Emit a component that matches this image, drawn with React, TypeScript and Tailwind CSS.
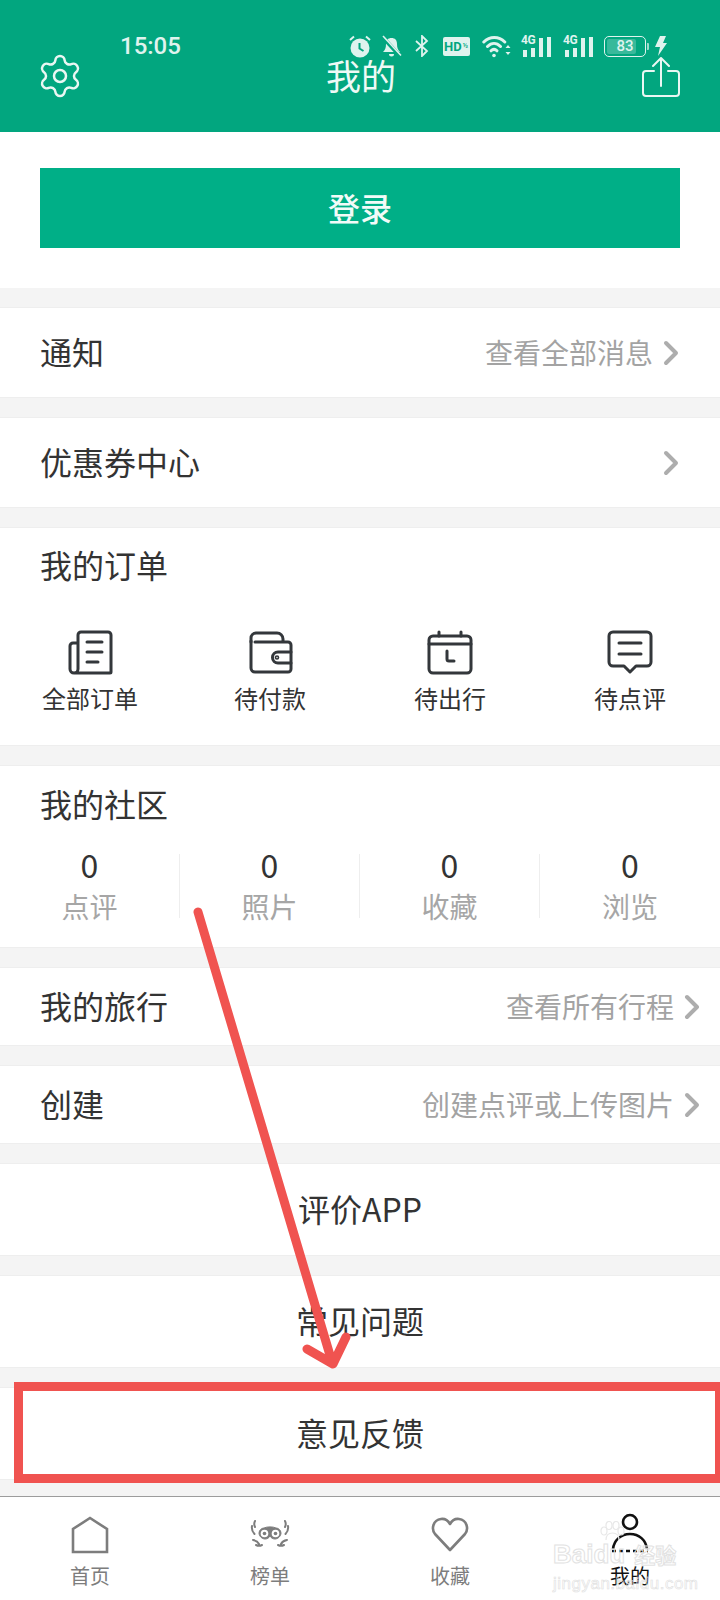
import type { ReactNode } from "react";
import { Settings } from "lucide-react";

const font = { fontFamily: '"Noto Sans CJK SC", "Noto Sans", sans-serif' };

function Chevron() {
  return (
    <svg width="16" height="26" viewBox="0 0 16 26" fill="none" stroke="#adadad" strokeWidth="4" strokeLinecap="round" strokeLinejoin="round">
      <path d="M3 3 13 13 3 23" />
    </svg>
  );
}

function Row({ title, hint, tall }: { title: string; hint?: string; tall?: boolean }) {
  return (
    <div className={`flex items-center bg-white border-y border-[#eeeeee] pl-10 ${tall ? "h-[91px] pr-[41px]" : "h-[79px] pr-[20px]"}`}>
      <span className="mb-[4px] text-[32px] text-[#333333]">{title}</span>
      <span className="mb-[2px] ml-auto text-[28px] text-[#a3a3a3]">{hint}</span>
      <span className="ml-[10px] flex">
        <Chevron />
      </span>
    </div>
  );
}

function CenterRow({ title }: { title: string }) {
  return (
    <div className="flex h-[93px] items-center justify-center bg-white border-y border-[#eeeeee] pb-[4px] text-[32px] text-[#333333]">
      {title}
    </div>
  );
}

function OrderIcon({ children }: { children: ReactNode }) {
  return (
    <svg width="48" height="46" viewBox="0 0 48 46" fill="none" stroke="#33373b" strokeWidth="3" strokeLinecap="round" strokeLinejoin="round">
      {children}
    </svg>
  );
}

const orders: { label: string; icon: ReactNode }[] = [
  {
    label: "全部订单",
    icon: (
      <>
        <path d="M12 14H7a3 3 0 0 0-3 3v23a4 4 0 0 0 8 0V6a3 3 0 0 1 3-3h27a3 3 0 0 1 3 3v37a1 1 0 0 1-1 1H8" />
        <path d="M21 13h15M21 23h15M21 33h11" />
      </>
    ),
  },
  {
    label: "待付款",
    icon: (
      <>
        <path d="M5 13V9a5 5 0 0 1 5-5h21a6 6 0 0 1 6 6v2" />
        <path d="M5 12v27a4 4 0 0 0 4 4h33a3 3 0 0 0 3-3V16a3 3 0 0 0-3-3H9" />
        <path d="M45 23H32a5.5 5.5 0 0 0 0 11h13" />
        <circle cx="31" cy="28.5" r="0.8" />
      </>
    ),
  },
  {
    label: "待出行",
    icon: (
      <>
        <rect x="3" y="7" width="42" height="37" rx="4" />
        <path d="M3 15h42M13 3v4M35 3v4" />
        <path d="M21 22v8a2 2 0 0 0 2 2h5" />
      </>
    ),
  },
  {
    label: "待点评",
    icon: (
      <>
        <path d="M7 3h34a4 4 0 0 1 4 4v26a4 4 0 0 1-4 4H30l-6 6-6-6H7a4 4 0 0 1-4-4V7a4 4 0 0 1 4-4Z" />
        <path d="M13 14h22M13 25h22" />
      </>
    ),
  },
];

const stats = ["点评", "照片", "收藏", "浏览"];

function StatusBar() {
  const tint = "#dff3ee";
  return (
    <div className="absolute inset-x-0 top-[34px] flex h-[24px] items-center pl-[120px] pr-[53px]">
      <span className="text-[24px] font-medium text-[#dff3ee]" style={{ fontFamily: "Roboto, sans-serif" }}>15:05</span>
      <svg className="ml-auto" width="22" height="23" viewBox="0 0 22 23" fill="none">
        <circle cx="11" cy="13" r="9.5" fill={tint} />
        <path d="M10.5 8v5.5l4 2.5" stroke="#02a67f" strokeWidth="2" />
        <path d="M1 5l4-3.5M21 5l-4-3.5" stroke={tint} strokeWidth="2" />
      </svg>
      <svg className="ml-[10px]" width="21" height="22" viewBox="0 0 21 22" fill={tint}>
        <path d="M2 17c2-2 3-4 3-8 0-4 2-6 5.500-6s5.500 2 5.500 6c0 4 1 6 3 8Z" />
        <path d="M8 19h5a2.500 2.500 0 0 1-5 0Z" />
        <path d="M1.500 2 19 21" stroke="#02a67f" strokeWidth="4" />
        <path d="M2 1 20 20.500" stroke={tint} strokeWidth="1.600" />
      </svg>
      <svg className="ml-[13px]" width="14" height="22" viewBox="0 0 14 22" fill="none" stroke={tint} strokeWidth="1.800">
        <path d="M1 6l11 10-5 5V1l5 5L1 16" />
      </svg>
      <div className="ml-[14px] flex h-[19px] w-[27px] items-center rounded-[2px] bg-[#dff3ee] pl-[1px] text-[13px] font-bold leading-none text-[#02a67f]" style={{ fontFamily: "Roboto, sans-serif" }}>
        HD<span className="ml-[1px] text-[7px]">½</span>
      </div>
      <svg className="ml-[12px]" width="29" height="23" viewBox="0 0 29 23" fill="none" stroke={tint} strokeWidth="3" strokeLinecap="round">
        <path d="M1.800 7c6-6 15-6 21 0M5.500 11.500c4-4 9-4 13 0" />
        <path d="M9 15.800c2-2 4-2 6 0" />
        <circle cx="12" cy="20.500" r="1.800" fill={tint} stroke="none" />
        <path d="M26 10l-2.500 3h5ZM26 20l-2.500-3h5Z" fill={tint} stroke="none" />
      </svg>
      {[0, 1].map((i) => (
        <div key={i} className={`relative h-[22px] w-[30px] ${i === 0 ? "ml-[10px]" : "ml-[12px]"}`}>
          <span className="absolute left-0 top-[-1px] text-[12px] font-bold leading-[12px] tracking-[-.5px] text-[#dff3ee]" style={{ fontFamily: "Roboto, sans-serif" }}>4G</span>
          <div className="absolute bottom-0 left-[2px] flex items-end gap-[4px]">
            <span className="h-[7px] w-[4px] bg-[#dff3ee]" />
            <span className="h-[9px] w-[4px] bg-[#dff3ee]" />
            <span className="h-[19px] w-[4px] bg-[#dff3ee]" />
            <span className="h-[20px] w-[4px] bg-[#dff3ee]" />
          </div>
        </div>
      ))}
      <div className="relative ml-[11px] flex h-[21px] w-[42px] items-center justify-center overflow-hidden rounded-[5px] border border-[#dff3ee] text-[15px] font-medium text-[#dff3ee]" style={{ fontFamily: "Roboto, sans-serif" }}>
        <span className="absolute inset-y-[2px] left-[2px] w-[29px] rounded-[2px] bg-[#dff3ee]/25" />
        <span className="relative">83</span>
      </div>
      <span className="ml-[1px] h-[7px] w-[2px] rounded-r-[1px] bg-[#dff3ee]/70" />
      <svg className="ml-[6px]" width="12" height="20" viewBox="0 0 12 20" fill={tint}>
        <path d="M5 0h6L8 7h4L3 20l2-9H0Z" />
      </svg>
    </div>
  );
}

function Header() {
  return (
    <div className="relative flex h-[132px] shrink-0 items-start justify-between bg-[#02a67f] px-10 pt-[56px]">
      <StatusBar />
      <Settings className="m-[-4px] text-[#eaf7f3]" size={48} strokeWidth={1.25} />
      <span className="mt-[-2px] text-[35px] leading-[42px] text-[#eefaf6]">我的</span>
      <svg className="mt-px" width="38" height="40" viewBox="0 0 38 40" fill="none" stroke="#eaf7f3" strokeWidth="2" strokeLinecap="round" strokeLinejoin="round">
        <path d="M12 14H4a3 3 0 0 0-3 3v19a3 3 0 0 0 3 3h30a3 3 0 0 0 3-3V17a3 3 0 0 0-3-3h-8" />
        <path d="M19 29V1M11 9l8-8 8 8" />
      </svg>
    </div>
  );
}

function TabBar() {
  const labelClass = "mt-[8px] text-[20px] leading-[28px] text-[#7d7d7d]";
  return (
    <div className="relative grid h-[104px] shrink-0 grid-cols-4 border-t border-[#9c9c9c] bg-white pt-[19px]">
      <div className="flex flex-col items-center">
        <svg className="h-[38px]" width="38" height="38" viewBox="0 0 38 38" fill="none" stroke="#7d7d7d" strokeWidth="2.600">
          <path d="M2 36V13L19 2l17 11v23Z" />
        </svg>
        <span className={labelClass}>首页</span>
      </div>
      <div className="flex flex-col items-center">
        <svg width="42" height="38" viewBox="0 0 42 38" fill="none" stroke="#7d7d7d">
          <path d="M10 17c0-3 3-5 5-5 3-1.500 9-1.500 12 0 2 0 5 2 5 5s-3 6-6 6c-2 0-4-1-5-3-1 2-3 3-5 3-3 0-6-3-6-6Z" fill="#7d7d7d" strokeWidth="1" />
          <circle cx="15.500" cy="17.500" r="3.800" fill="#ffffff" stroke="none" />
          <circle cx="26.500" cy="17.500" r="3.800" fill="#ffffff" stroke="none" />
          <circle cx="15.500" cy="17.500" r="1.800" fill="#7d7d7d" stroke="none" />
          <circle cx="26.500" cy="17.500" r="1.800" fill="#7d7d7d" stroke="none" />
          <path d="M6 5c-1 2-1 4 0 6M3 10c-.5 3 .5 6 2.500 8M36 5c1 2 1 4 0 6M39 10c.5 3-.5 6-2.500 8" strokeWidth="2" strokeLinecap="round" />
          <path d="M4 24c3 .5 5 2 6 4M7 29c2 1 4 1 6 0M38 24c-3 .5-5 2-6 4M35 29c-2 1-4 1-6 0" strokeWidth="2" strokeLinecap="round" />
        </svg>
        <span className={labelClass}>榜单</span>
      </div>
      <div className="flex flex-col items-center">
        <svg width="38" height="38" viewBox="0 0 38 38" fill="none" stroke="#7d7d7d" strokeWidth="2.600" strokeLinejoin="round">
          <path d="M19 34 4 18C0 13 2 4 10 3c4-.5 7 1.500 9 5 2-3.500 5-5.500 9-5 8 1 10 10 6 15Z" />
        </svg>
        <span className={labelClass}>收藏</span>
      </div>
      <div className="flex flex-col items-center">
        <svg className="mt-[-3px]" width="38" height="41" viewBox="0 0 38 41" fill="none" stroke="#111111" strokeWidth="2.600">
          <circle cx="19" cy="9" r="7" />
          <path d="M2 36c1-9 8-15 17-15s16 6 17 15" />
          <path d="M1 38h36" strokeDasharray="4 3" />
        </svg>
        <span className="mt-[8px] text-[20px] leading-[28px] text-[#111111]">我的</span>
      </div>
      {/* baidu watermark */}
      <div className="absolute left-[553px] top-[24px] w-[130px] whitespace-nowrap leading-none text-transparent" style={{ fontFamily: '"Liberation Sans", "Noto Sans CJK SC", sans-serif' }}>
        <svg className="ml-[46px]" width="26" height="20" viewBox="0 0 26 20" fill="none" stroke="#e8e8e8" strokeWidth="1.200">
          <ellipse cx="5" cy="10" rx="3" ry="4" />
          <ellipse cx="10" cy="4.500" rx="3" ry="4" />
          <ellipse cx="17" cy="4.500" rx="3" ry="4" />
          <ellipse cx="22" cy="10" rx="3" ry="4" />
          <path d="M7 19c0-5 3-7 6.500-7s6.500 2 6.500 7" />
        </svg>
        <div className="text-[26px] font-bold [-webkit-text-stroke:1px_#e2e2e2]">Baidu<span className="ml-[9px] text-[21px]">经验</span></div>
        <div className="mt-[8px] text-[17px] tracking-[.5px] [-webkit-text-stroke:.6px_#e0e0e0]">jingyan.baidu.com</div>
      </div>
    </div>
  );
}

export default function App() {
  return (
    <div className="relative flex h-[1600px] w-[720px] flex-col overflow-hidden bg-[#f4f4f4]" style={font}>
      <Header />
      <div className="flex flex-1 flex-col gap-[19px]">
        <div className="h-[156px] bg-white px-10 pt-[36px]">
          <div className="flex h-[80px] items-center justify-center bg-[#00af87] pb-[2px] text-[32px] font-medium text-[#f2fbf8]">登录</div>
        </div>
        <Row tall title="通知" hint="查看全部消息" />
        <Row tall title="优惠券中心" />
        <div className="h-[219px] bg-white border-y border-[#eeeeee] pt-[16px]">
          <div className="pl-10 text-[32px] leading-[40px] text-[#333333]">我的订单</div>
          <div className="mt-[45px] grid grid-cols-4">
            {orders.map((o) => (
              <div key={o.label} className="flex flex-col items-center">
                <OrderIcon>{o.icon}</OrderIcon>
                <span className="mt-[9px] text-[24px] leading-[28px] text-[#333333]">{o.label}</span>
              </div>
            ))}
          </div>
        </div>
        <div className="h-[183px] bg-white border-y border-[#eeeeee] pt-[17px]">
          <div className="pl-10 text-[32px] leading-[40px] text-[#333333]">我的社区</div>
          <div className="mt-[31px] grid grid-cols-4">
            {stats.map((s) => (
              <div key={s} className="flex h-[64px] flex-col items-center border-r border-[#eeeeee] last:border-r-0">
                <span className="mt-[-3px] text-[32px] leading-[26px] text-[#333333]">0</span>
                <span className="mt-[12px] text-[28px] leading-[34px] text-[#a6a6a6]">{s}</span>
              </div>
            ))}
          </div>
        </div>
        <Row title="我的旅行" hint="查看所有行程" />
        <Row title="创建" hint="创建点评或上传图片" />
        <CenterRow title="评价APP" />
        <CenterRow title="常见问题" />
        <CenterRow title="意见反馈" />
      </div>
      <TabBar />
      {/* red annotation drawn over the page */}
      <div className="absolute left-[14px] top-[1382px] h-[101px] w-[706px] border-y-[9px] border-l-[9px] border-r-[5px] border-[#f05350]" />
      <svg className="absolute inset-0" width="720" height="1600" fill="none" stroke="#f05350" strokeWidth="9" strokeLinecap="round" strokeLinejoin="round">
        <path d="M198 912 332 1362M307 1349 333 1364 346 1337" />
      </svg>
    </div>
  );
}
